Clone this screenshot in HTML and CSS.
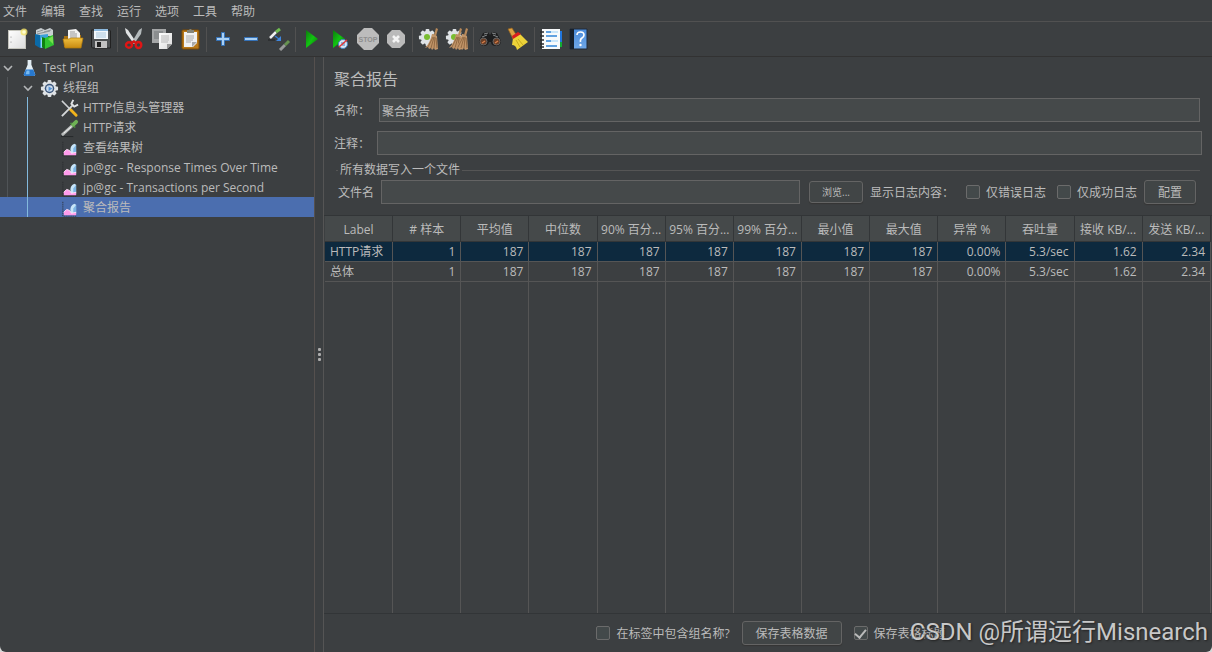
FILE: index.html
```html
<!DOCTYPE html>
<html lang="zh-CN">
<head>
<meta charset="utf-8">
<title>聚合报告</title>
<link rel="stylesheet" href="styles.css">
</head>
<body>
<svg class="defs" width="0" height="0" aria-hidden="true">
  <defs>
    <linearGradient id="page" x2="1" y2="1"><stop stop-color="#fff"/><stop offset="1" stop-color="#dcdcdc"/></linearGradient>
    <linearGradient id="gold" x2="0" y2="1"><stop stop-color="#f0c040"/><stop offset="1" stop-color="#c88a10"/></linearGradient>
    <linearGradient id="green" x2="1" y2="1"><stop stop-color="#0c7c0c"/><stop offset=".5" stop-color="#12c312"/><stop offset="1" stop-color="#067006"/></linearGradient>
    <linearGradient id="blue" x2="0" y2="1"><stop stop-color="#4a8ad8"/><stop offset="1" stop-color="#6fa8ea"/></linearGradient>
    <symbol id="gear" viewBox="0 0 20 20">
      <g fill="#dfe3e6"><rect x="8" y="1" width="4" height="18" rx="1"/><rect x="8" y="1" width="4" height="18" rx="1" transform="rotate(45 10 10)"/><rect x="8" y="1" width="4" height="18" rx="1" transform="rotate(90 10 10)"/><rect x="8" y="1" width="4" height="18" rx="1" transform="rotate(135 10 10)"/><circle cx="10" cy="10" r="7"/></g>
    </symbol>
    <symbol id="broom" viewBox="0 0 14 22">
      <path d="M11 0l2 1-2 7-2-1z" fill="#b98a5a"/><path d="M8 6l4 2 1 13-3 1-1-2-2 2-1-2-2 1-1-2-3 1q5-5 7-14z" fill="#c09468"/><path d="M8 9L3 19M9 9L6 20M10 9l-1 11M11 10l1 10" stroke="#7e5734" stroke-width=".7"/>
    </symbol>
    <symbol id="chart" viewBox="0 0 20 20">
      <path d="M3 3v15h15" fill="none" stroke="#272a2c" stroke-dasharray="1 1"/>
      <path d="M11 14q-1-7 4-9l2 1v10h-5z" fill="#c7e4f8"/><path d="M14 10l3-4v8l-3 1z" fill="#7db5e4"/>
      <path d="M4 17v-3l3-3 3 1 2 3 5-1v3z" fill="#ff9cec"/><path d="M4 14l3-3 3 1 2 3 5-1" fill="none" stroke="#ffe4f8"/>
    </symbol>
    <symbol id="chevron" viewBox="0 0 16 16"><path d="M4 6l4 4 4-4" fill="none" stroke="#b4b6b8" stroke-width="1.6"/></symbol>
  </defs>
</svg>
<div class="app">
  <nav class="menubar" aria-label="菜单">
    <button>文件</button><button>编辑</button><button>查找</button><button>运行</button><button>选项</button><button>工具</button><button>帮助</button>
  </nav>
  <div class="toolbar" role="toolbar" aria-label="工具栏">
    <button aria-label="新建"><svg viewBox="0 0 24 24"><rect x="3.500" y="3.500" width="17" height="18" fill="url(#page)" stroke="#c4c4bc"/><circle cx="6" cy="10" r=".6" fill="#888"/><circle cx="6" cy="15" r=".6" fill="#888"/><circle cx="19" cy="5" r="3.500" fill="#f5e56a" opacity=".8"/><circle cx="19" cy="5" r="1.800" fill="#fffdd0"/></svg></button>
    <button aria-label="模板"><svg viewBox="0 0 24 24"><path d="M3 3l5-2 4 2 5-2 3 2v6H3z" fill="#c9cfd2"/><path d="M4 5l6-2M11 5l7-2M4 7l13-3" stroke="#8d9397"/><path d="M2 7l5 1v13l-5-3z" fill="#0b6aa8"/><path d="M7 8l8-1v12l-8 2z" fill="#3aa0da"/><path d="M8 11l2-1v10l-2 1z" fill="#8fd5f5"/><path d="M9 10l3 1v11l-3-2z" fill="#0d830d"/><path d="M12 11l8-3 1 10-9 4z" fill="#31c431"/><path d="M15 12l5-3v8z" fill="#76e04f"/></svg></button>
    <button aria-label="打开"><svg viewBox="0 0 24 24"><path d="M3 9h5l1-1h11v12H3z" fill="#a87110"/><path d="M7 3l8-1 4 4v9H7z" fill="#f2f2f2"/><path d="M9 5h5M9 7h7M9 9h7M9 11h7" stroke="#999"/><path d="M2 12h6l2-1h12l-2 10H4z" fill="url(#gold)" stroke="#b37b0b" stroke-width=".7"/></svg></button>
    <button aria-label="保存"><svg viewBox="0 0 24 24"><path d="M2.500 3h18l1 1v17h-18l-1-1z" fill="#4d5052" stroke="#222"/><path d="M5 2h14v10H5z" fill="#f3f8fc"/><path d="M5 2h14v2H5z" fill="#8db9de"/><path d="M7 6h10M7 8h10M7 10h10" stroke="#a9c6dc"/><path d="M6 14h12v7H6z" fill="#c2c2c2"/><path d="M8 15h4v5H8z" fill="#222"/></svg></button>
    <i class="sep"></i>
    <button aria-label="剪切"><svg viewBox="0 0 24 24"><path d="M3 1l3 2 8 12-2 2L4 6z" fill="#e0e3e4"/><path d="M20 1l-3 2-7 12 2 2 7-10z" fill="#b4babc"/><g fill="none" stroke="#df1515" stroke-width="2.400"><ellipse cx="7" cy="18" rx="3" ry="2.800"/><ellipse cx="16.500" cy="18" rx="2.800" ry="3"/></g><path d="M8 15l4-2 4 3-2 1-2-1-3 1z" fill="#d31515"/></svg></button>
    <button aria-label="复制"><svg viewBox="0 0 24 24"><path d="M2 2h14v14H2z" fill="#a4a6a7"/><path d="M4 5h9M4 7h9M4 9h8M4 11h5" stroke="#737678"/><path d="M9 6h13v11l-5 5H9z" fill="url(#page)"/><path d="M11 9h8M11 11h8M11 13h8M11 15h7" stroke="#b7b7b7"/><path d="M17 22v-5h5z" fill="#999"/></svg></button>
    <button aria-label="粘贴"><svg viewBox="0 0 24 24"><rect x="4" y="3" width="17" height="19" rx="1" fill="#b97818" stroke="#7f4c04"/><path d="M6 5h13v11l-4 4H6z" fill="#f1f1f1"/><path d="M9 5V3h2q1-2 3 0h2v3H9z" fill="#858579"/><path d="M8 9h8M8 11h8M8 13h7M8 15h5" stroke="#aaa"/><path d="M14 20v-5h5z" fill="#aaa"/></svg></button>
    <i class="sep"></i>
    <button aria-label="展开"><svg viewBox="0 0 24 24"><path d="M10.500 5.500h3v5h5v3h-5v5h-3v-5h-5v-3h5z" fill="#a9d0f4" stroke="#3572b8"/></svg></button>
    <button aria-label="折叠"><svg viewBox="0 0 24 24"><path d="M5.500 10.500h13v3h-13z" fill="#a9d0f4" stroke="#3572b8"/></svg></button>
    <button aria-label="切换"><svg viewBox="0 0 24 24"><path d="M3 11l6-6" stroke="#f0f0f0" stroke-width="2.500"/><path d="M9 5l4-3" stroke="#6fbd50" stroke-width="3"/><path d="M1 13h7" stroke="#202224"/><path d="M8 9l4 3" stroke="#3479cd" stroke-width="1.500"/><path d="M14 9v5h-5z" fill="#3f87df"/><path d="M13 23l5-5" stroke="#b2b2b2" stroke-width="3" opacity=".8"/><path d="M18 18l4-4" stroke="#679250" stroke-width="3"/></svg></button>
    <i class="sep"></i>
    <button aria-label="启动"><svg viewBox="0 0 24 24"><path d="M6 3l12 9-12 9z" fill="url(#green)"/></svg></button>
    <button aria-label="不停顿启动"><svg viewBox="0 0 24 24"><path d="M5 3l12 9-12 9z" fill="url(#green)"/><circle cx="15" cy="17" r="4.500" fill="#d7e7f5" stroke="#4883bd"/><path d="M13 16h4M14 18h3" stroke="#437fb8"/><path d="M11 20l8-7" stroke="#e33737" stroke-width="1.500"/></svg></button>
    <button aria-label="停止"><svg viewBox="0 0 24 24"><path d="M8 1h8l7 7v8l-7 7H8l-7-7V8z" fill="#bcbcbc"/><text x="12" y="15" text-anchor="middle" class="stop">STOP</text></svg></button>
    <button aria-label="关闭"><svg viewBox="0 0 24 24"><path d="M8 3h8l5 5v8l-5 5H8l-5-5V8z" fill="#bababa"/><path d="M9 9l6 6M15 9l-6 6" stroke="#f4f4f4" stroke-width="2.600"/></svg></button>
    <i class="sep"></i>
    <button aria-label="清除"><svg viewBox="0 0 24 24"><use href="#gear" x="1" y="1" width="19" height="19"/><circle cx="10" cy="10" r="3" fill="#79bd31"/><use href="#broom" x="8" y="1" width="14" height="22"/></svg></button>
    <button aria-label="清除全部"><svg viewBox="0 0 24 24"><use href="#gear" x="0" y="1" width="19" height="19"/><circle cx="9" cy="10" r="3" fill="#79bd31"/><use href="#broom" x="4" y="1" width="14" height="22"/><use href="#broom" x="10" y="1" width="14" height="22"/></svg></button>
    <i class="sep"></i>
    <button aria-label="搜索"><svg viewBox="0 0 24 24"><path d="M5 6l5-1 2 3 2-3 5 1 4 8q0 5-5 5t-5-4h-2q-1 4-5 4t-5-5z" fill="#1d1e1f"/><path d="M6 7l4-1M14 6l4 1M4 10l5-2M15 8l5 2" stroke="#85898b"/><circle cx="5.500" cy="14.500" r="3.500" fill="#693d25" stroke="#666"/><circle cx="18.500" cy="14.500" r="3.500" fill="#693d25" stroke="#666"/><path d="M4 16l3-2M17 16l3-2" stroke="#d57e49" stroke-width="1.500"/></svg></button>
    <button aria-label="重置搜索"><svg viewBox="0 0 24 24"><path d="M2 2l4-1 5 8-4 3z" fill="#dda043" stroke="#91601b" stroke-width=".7"/><path d="M7 11l7-4 8 8-11 8q-1-5-5-5z" fill="#ecd239"/><path d="M6 9l6-4 3 2-8 5z" fill="#d81e1e"/><path d="M10 13l4 7M12 12l5 6" stroke="#c5aa1e"/></svg></button>
    <i class="sep"></i>
    <button aria-label="函数助手"><svg viewBox="0 0 24 24"><path d="M18 4h5v11h-5z" fill="#2176dd"/><path d="M18 15h5v5h-5z" fill="#12ac33"/><path d="M3 2h18v20H3z" fill="#f8fafb"/><path d="M7 5h5M7 9h11M7 14h5M7 19h11" stroke="#3185d8" stroke-width="1.500"/><path d="M12 5h7M12 14h7" stroke="#9bd1f7"/><g stroke="#292b2d" stroke-width="1.500"><path d="M1 5h4M1 9h4M1 13h4M1 17h4M1 20h4"/></g></svg></button>
    <button aria-label="帮助"><svg viewBox="0 0 24 24"><path d="M3 2h17v20H3z" fill="url(#blue)" stroke="#202b38"/><path d="M3 2h4v20H3z" fill="#17212d"/><path d="M10 8q0-3 3.500-3T17 8q0 2-2 3t-1.500 4" fill="none" stroke="#fff" stroke-width="1.600"/><circle cx="13.500" cy="18" r="1.200" fill="#fff"/></svg></button>
  </div>
  <div class="workspace">
    <aside class="side">
      <ul class="tree" role="tree">
        <li class="branch" role="treeitem" aria-expanded="true">
          <div class="node"><svg class="chev"><use href="#chevron"/></svg><svg class="icon" viewBox="0 0 20 20"><path d="M8 1h4v5l4 10q0 2-2 2H6q-2 0-2-2l4-10z" fill="#e2edf3"/><path d="M6 11h8l2 5q0 2-2 2H6q-2 0-2-2z" fill="#2879cf"/><path d="M7 12h3v4H6z" fill="#78baf0"/></svg><span>Test Plan</span></div>
          <ul role="group">
            <li class="branch active" role="treeitem" aria-expanded="true">
              <div class="node l1"><svg class="chev"><use href="#chevron"/></svg><svg class="icon" viewBox="0 0 20 20"><use href="#gear" width="20" height="20"/><circle cx="10" cy="10" r="5" fill="#3c567b"/><circle cx="10" cy="10" r="3.500" fill="#c9daec"/><path d="M9 8l4 2-4 3z" fill="#5793d3"/></svg><span>线程组</span></div>
              <ul role="group">
                <li role="treeitem"><div class="node l2"><svg class="icon" viewBox="0 0 20 20"><path d="M2 2l9 9" stroke="#cfd2d4" stroke-width="1.600"/><path d="M11 11l6 6" stroke="#f1b31b" stroke-width="3" stroke-linecap="round"/><path d="M2 18L14 6" stroke="#d5d8da" stroke-width="2"/><path d="M14 1l-2 4 3 3 4-2" fill="none" stroke="#e0e3e5" stroke-width="2"/></svg><span>HTTP信息头管理器</span></div></li>
                <li role="treeitem"><div class="node l2"><svg class="icon" viewBox="0 0 20 20"><path d="M2 17L13 7" stroke="#b5b8b8" stroke-width="3"/><path d="M4 15l8-7" stroke="#f7f7f7"/><path d="M11 4l5 5" stroke="#4b8440" stroke-width="2"/><path d="M14 6l3-3" stroke="#6eb255" stroke-width="4" stroke-linecap="round"/><path d="M1 18.500h13" stroke="#25282a"/></svg><span>HTTP请求</span></div></li>
                <li role="treeitem"><div class="node l2"><svg class="icon"><use href="#chart"/></svg><span>查看结果树</span></div></li>
                <li role="treeitem"><div class="node l2"><svg class="icon"><use href="#chart"/></svg><span>jp@gc - Response Times Over Time</span></div></li>
                <li role="treeitem"><div class="node l2"><svg class="icon"><use href="#chart"/></svg><span>jp@gc - Transactions per Second</span></div></li>
                <li role="treeitem" aria-selected="true"><div class="node l2 selected"><svg class="icon"><use href="#chart"/></svg><span>聚合报告</span></div></li>
              </ul>
            </li>
          </ul>
        </li>
      </ul>
    </aside>
    <div class="splitter"><i></i><i></i><i></i></div>
    <main class="panel">
      <div class="form">
        <h1>聚合报告</h1>
        <div class="field name"><label for="name">名称：</label><input id="name" type="text" value="聚合报告"></div>
        <div class="field note"><label for="note">注释：</label><input id="note" type="text"></div>
        <fieldset>
          <legend>所有数据写入一个文件</legend>
          <div class="file">
            <label for="file">文件名</label><input id="file" type="text">
            <button class="btn browse">浏览...</button>
            <span class="caption">显示日志内容：</span>
            <label class="check"><input type="checkbox"><span>仅错误日志</span></label>
            <label class="check"><input type="checkbox"><span>仅成功日志</span></label>
            <button class="btn">配置</button>
          </div>
        </fieldset>
      </div>
      <div class="results">
        <table>
          <thead><tr><th>Label</th><th># 样本</th><th>平均值</th><th>中位数</th><th>90% 百分...</th><th>95% 百分...</th><th>99% 百分...</th><th>最小值</th><th>最大值</th><th>异常 %</th><th>吞吐量</th><th>接收 KB/...</th><th>发送 KB/...</th></tr></thead>
          <tbody>
            <tr class="selected"><td>HTTP请求</td><td>1</td><td>187</td><td>187</td><td>187</td><td>187</td><td>187</td><td>187</td><td>187</td><td>0.00%</td><td>5.3/sec</td><td>1.62</td><td>2.34</td></tr>
            <tr><td>总体</td><td>1</td><td>187</td><td>187</td><td>187</td><td>187</td><td>187</td><td>187</td><td>187</td><td>0.00%</td><td>5.3/sec</td><td>1.62</td><td>2.34</td></tr>
            <tr class="filler"><td></td><td></td><td></td><td></td><td></td><td></td><td></td><td></td><td></td><td></td><td></td><td></td><td></td></tr>
          </tbody>
        </table>
      </div>
      <footer>
        <label class="check"><input type="checkbox"><span>在标签中包含组名称?</span></label>
        <button class="btn">保存表格数据</button>
        <label class="check"><input type="checkbox" checked><span>保存表格标题</span></label>
      </footer>
    </main>
  </div>
  <div class="watermark">CSDN @所谓远行Misnearch</div>
</div>
</body>
</html>
```

FILE: styles.css
```css
* { box-sizing: border-box; }
body {
  margin: 0;
  background: #d8d8d8;
  color: #bbbbbb;
  font: 12px/16px "Open Sans", "Noto Sans CJK SC", sans-serif;
}
button, input { font: inherit; color: inherit; }
ul { list-style: none; margin: 0; padding: 0; }
.defs { position: absolute; }
.app {
  position: relative;
  display: flex;
  flex-direction: column;
  height: 100vh;
  overflow: hidden;
  background: #3c3f41;
  border-radius: 0 0 6px 6px;
}

.menubar {
  display: flex;
  gap: 14px;
  height: 22px;
  padding: 2px 0 0 3px;
  border-bottom: 1px solid #515151;
}
.menubar button, .toolbar button {
  padding: 0;
  border: 0;
  background: none;
}
.toolbar {
  display: flex;
  align-items: center;
  height: 35px;
  padding-left: 3px;
  border-bottom: 1px solid #323232;
}
.toolbar button { display: flex; justify-content: center; width: 28px; }
.toolbar svg { width: 24px; height: 24px; }
.sep { width: 1px; height: 25px; margin: 0 2px; background: #515151; }
.stop { font: bold 7px "Liberation Sans", sans-serif; fill: #8e8e8e; }

.workspace { display: flex; flex: 1; min-height: 0; }
.side { flex: 0 0 315px; border-right: 1px solid #55504e; }
.branch { position: relative; }
.branch::before {
  content: "";
  position: absolute;
  top: 20px;
  bottom: 0;
  left: 7px;
  width: 1px;
  background: #505457;
}
.branch.active::before { left: 27px; background: #83b9dc; }
.node {
  display: flex;
  align-items: center;
  gap: 4px;
  height: 20px;
  padding-top: 2px;
  white-space: nowrap;
}
.node.l1 { padding-left: 20px; }
.node.l2 { padding-left: 60px; }
.node.selected { background: #4b6eaf; }
.chev { width: 16px; height: 16px; }
.icon { width: 19px; height: 19px; }
.splitter {
  display: flex;
  flex: 0 0 9px;
  flex-direction: column;
  align-items: center;
  justify-content: center;
  gap: 2px;
  border-right: 1px solid #555555;
}
.splitter i { width: 3px; height: 3px; border-radius: 1px; background: #adadad; }

.panel { display: flex; flex: 1; flex-direction: column; min-width: 0; }
.form { padding: 10px 10px 11px; }
h1 { margin: 0 0 7px; font-size: 16px; line-height: 24px; font-weight: 400; }
.field { display: flex; align-items: center; margin-bottom: 9px; }
.field label { flex: none; width: 43px; padding-top: 2px; }
.field.name label { width: 45px; }
.field.name { margin-right: 2px; }
input[type="text"] {
  flex: 1;
  min-width: 0;
  height: 24px;
  padding: 2px 2px 0;
  border: 1px solid #646464;
  background: #45494a;
  outline: none;
}
fieldset {
  min-width: 0;
  margin: -2px 2px 0;
  padding: 2px 4px 0 2px;
  border: 0 solid #555555;
  border-top-width: 1px;
}
legend { padding: 0 2px; }
.file { display: flex; align-items: center; }
.file > label:first-child { margin-right: 7px; padding-top: 2px; }
.btn {
  height: 24px;
  padding: 1px 13px 0;
  border: 1px solid #646464;
  border-radius: 3px;
  background: #414546;
  box-shadow: 0 1px 1px #353535;
  white-space: nowrap;
}
.browse { height: 22px; margin: 0 7px 0 9px; padding: 0 12px; font-size: 10px; }
.check { display: flex; align-items: center; gap: 6px; white-space: nowrap; }
.check span { padding-top: 1px; }
.file .check { margin-right: 11px; }
.file .check:last-of-type { margin-right: 7px; }
.caption { margin-right: 12px; padding-top: 2px; white-space: nowrap; }
input[type="checkbox"] {
  appearance: none;
  flex: none;
  width: 14px;
  height: 14px;
  margin: 0;
  border: 1px solid #6b6b6b;
  border-radius: 2px;
  background: #43494a;
}
input[type="checkbox"]:checked { display: flex; align-items: flex-start; justify-content: center; }
input[type="checkbox"]:checked::before {
  content: "";
  width: 5px;
  height: 9px;
  border: solid #bbbbbb;
  border-width: 0 2px 2px 0;
  transform: rotate(40deg);
}

.results { flex: 1; min-height: 0; padding: 0 1px; border-top: 1px solid #323537; }
table { width: 100%; height: 100%; border-collapse: separate; border-spacing: 0; table-layout: fixed; }
th {
  height: 26px;
  padding: 2px 0 0;
  border-right: 1px solid #333638;
  border-bottom: 1px solid #333638;
  background: #45494a;
  font-weight: 400;
  white-space: nowrap;
  overflow: hidden;
}
td {
  height: 20px;
  padding: 0 5px;
  border-right: 1px solid #555555;
  border-bottom: 1px solid #555555;
  text-align: right;
  white-space: nowrap;
}
td:first-child { text-align: left; }
tr.selected td { background: #0d293e; }
tr.filler td { height: auto; border-bottom: 0; }
footer {
  display: flex;
  align-items: center;
  justify-content: center;
  gap: 12px;
  height: 39px;
  padding-left: 6px;
  border-top: 1px solid #323537;
}
.watermark {
  position: absolute;
  right: 4px;
  bottom: 4px;
  color: #c8c8c8;
  font: 24px/32px Roboto, "Noto Sans CJK SC", sans-serif;
  text-shadow: 1px 1px 2px #222222;
}
```
